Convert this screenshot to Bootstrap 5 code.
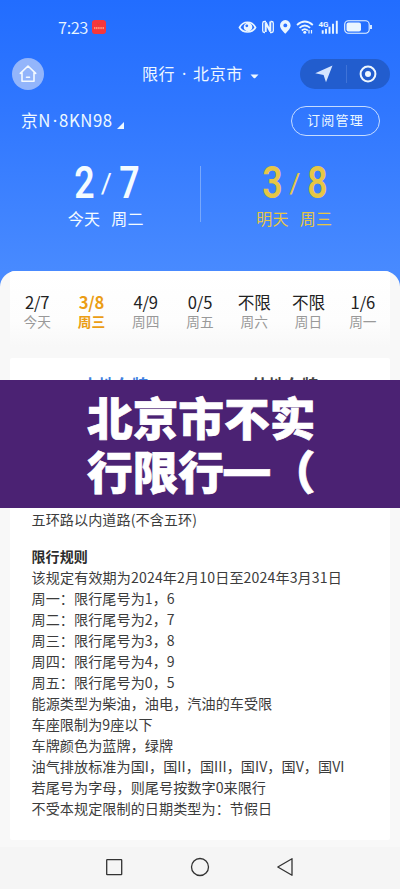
<!DOCTYPE html>
<html lang="zh-CN">
<head>
<meta charset="utf-8">
<meta name="viewport" content="width=device-width, initial-scale=1">
<title>限行 · 北京市</title>
<link href="https://cdn.jsdelivr.net/npm/bootstrap@5.3.0/dist/css/bootstrap.min.css" rel="stylesheet">
<style>
body{font-family:"Noto Sans CJK SC",sans-serif;background:#f5f5f5;}
.screen{width:400px;height:889px;background:linear-gradient(#226dff 0,#3077ff 110px,#488aff 270px,#488aff 300px);}
svg{display:block;flex:none}
.statusbar{height:54px;padding:0 28px 0 58px;color:#eaf6ff}
.clock{font-size:16.500px;line-height:20px;font-weight:350;letter-spacing:-.4px}
.appchip{width:14px;height:14px;border-radius:3px;background:#f5373c;margin-left:4px}
.titlebar{height:40px;padding:0 10px 0 12px}
.home{width:32px;height:32px;background:#93b5fb}
.city{font-size:16px;line-height:24px;color:#eef7ff;letter-spacing:.55px;margin-left:98px;margin-top:-1px}
.dot{display:inline-block;text-align:center;font-family:"Noto Sans",sans-serif;letter-spacing:0}
.city .dot{width:18px}
.plate .dot{width:8px}
.capsule{width:90px;height:30px;background:#225dce;padding:0 13px 0 15px}
.capsule .split{width:1px;height:18px;background:#3f73d8}
.platebar{height:54px;padding:0 20px 0 21px;color:#eef8ff}
.plate{font-size:16.800px;line-height:24px;margin-top:-2px;letter-spacing:.55px}
.manage{width:89px;height:30px;border:1px solid #c6dcff;font-size:13px;letter-spacing:1.2px;padding-bottom:2px;color:#eef8ff}
.days{height:123px;padding-top:18px}
.day{width:188px;color:#f4fbff}
.day.today{margin-left:12px}
.day.next{color:#e6c646;margin-right:12px}
.figs{height:36px;font-family:Roboto,sans-serif;font-weight:500;font-size:43.500px;line-height:36px;padding-left:1px}
.figs b{display:inline-block;font-weight:600;transform:scaleX(.82);width:24px;text-align:center}
.figs i{font-style:normal;font-weight:400;font-size:27px;width:21px;text-align:center}
.when{font-size:16px;line-height:24px;letter-spacing:.3px;word-spacing:1.500px;margin-top:4px}
.rule{width:1px;height:56px;background:#79a8fb;margin-top:0}
.sheet{height:576px;background:#f8f8f8;border-radius:16px 16px 0 0;overflow:hidden;padding:0 10px}
.week{height:87px;background:linear-gradient(#fff 0,#fdfdfd 50px,#f8f8f8 76px);padding-top:19px}
.wd{font-size:16.600px;line-height:24px;color:#222;letter-spacing:-.15px}
.wl{font-size:13.700px;line-height:15px;color:#999}
.sel .wd,.sel .wl{color:#eb9d14;font-weight:700}
.panel{height:482px;background:#fff;padding:15px 22px 0;border-radius:2px}
.tabs{font-size:16.700px;line-height:24px;font-weight:700;margin:0 -22px;color:#444}
.tabs .on{color:#3f7fe0}
.rules{font-size:14.100px;line-height:21px;color:#3c3c3c;letter-spacing:.07px;white-space:nowrap;padding-top:112px;margin-left:-.5px}
.rules .term{letter-spacing:.13px}
.rules h6{font-size:14px;line-height:21px;font-weight:700;color:#2c2c2c;margin:16px 0 0}
.banner{top:380px;left:0;width:400px;height:128px;background:#4b2273;color:#fff;font-weight:900;font-size:45.700px;line-height:54px;padding:9px 0 0 87px;white-space:nowrap;-webkit-text-stroke:.7px #fff}
.dash{display:inline-block;width:45.700px;height:54px;vertical-align:top;font-family:Inter,sans-serif;font-size:45.700px;line-height:54px;text-align:center}
.navkeys{height:42px;background:#f5f5f5;padding:0 106px 3px 105px}
</style>
<script src="https://cdn.jsdelivr.net/npm/bootstrap@5.3.0/dist/js/bootstrap.bundle.min.js"></script>
</head>
<body>
<div class="screen position-relative overflow-hidden">
  <div class="statusbar d-flex align-items-center">
    <span class="clock">7:23</span><span class="appchip"><svg width="14" height="14" viewBox="0 0 14 14"><path d="M2 7.600h10M2 8.600h10" stroke="#ff9b7c" stroke-dasharray="1.3 .5"/><path d="M5 3.700l1.500 1 1.500-1" stroke="#d64a2a" fill="none"/></svg></span>
    <svg class="ms-auto" width="134" height="18" viewBox="238 18 134 18" fill="none" stroke="#eaf6ff">
      <path d="M239.500 27.500C243 20.500 252 20.500 255.500 27.500C252 33.500 243 33.500 239.500 27.500Z" stroke-width="1.700"/>
      <circle cx="248" cy="27" r="4.300" fill="#eaf6ff" stroke="none"/><circle cx="246.800" cy="25.800" r="1.400" fill="#2d73ff" stroke="none"/>
      <path d="M266 21.500h-1.500q-1.800 0-1.800 1.800v7.400q0 1.800 1.800 1.800h.5M270.500 21.500h1q1.800 0 1.800 1.800v7.400q0 1.800-1.800 1.800h-1.500" stroke-width="1.300"/>
      <path d="M265.700 32v-9.500l4.600 9v-10" stroke-width="2"/>
      <path d="M285.300 33.800c-2-2.700-5.300-5-5.300-8.400a5.300 5.300 0 0 1 10.600 0c0 3.400-3.300 5.700-5.300 8.400z" fill="#eaf6ff" stroke="none"/><circle cx="285.300" cy="25.400" r="1.900" fill="#2a70ff" stroke="none"/>
      <path d="M297 25q7.800-7 15.800 0M299.500 27.800q5.300-4.600 10.600 0M301.800 30.500q3-2.600 6 0" stroke-width="1.700"/><circle cx="304.800" cy="32.200" r="1.500" fill="#eaf6ff" stroke="none"/><path d="M309 30v3.500M311.500 30v3.500" stroke-width="1.200"/>
      <text x="318.500" y="26.500" font-family="Roboto,sans-serif" font-size="8" font-weight="700" fill="#eaf6ff" stroke="none">4G</text>
      <path d="M322.700 33.700v-3.500M326 33.700v-5M329.500 33.700v-7M333 33.700v-10M336.800 33.700v-13" stroke-width="1.900"/>
      <rect x="344.700" y="20.700" width="24.500" height="12.500" rx="3.700" stroke-width="1.100"/><rect x="346.500" y="22.400" width="14.500" height="9.200" rx="2" fill="#eaf6ff" stroke="none"/><path d="M371 25v4" stroke-width="1.800"/>
    </svg>
  </div>
  <div class="titlebar d-flex align-items-center">
    <span class="home rounded-circle d-flex align-items-center justify-content-center"><svg width="20" height="20" viewBox="0 0 20 20" fill="none" stroke="#f4faff" stroke-width="1.600" stroke-linejoin="round" stroke-linecap="round"><path d="M2.300 9.400L10 2l7.700 7.400M4 8.500v8.800h12V8.500M8.500 13.200h3"/></svg></span>
    <span class="city">限行<span class="dot">·</span>北京市</span>
    <svg class="ms-1 mt-1" width="12" height="5" viewBox="-3 0 12 5"><path d="M.5.500h8L5.300 4q-.8.700-1.600 0z" fill="#eef7ff"/></svg>
    <span class="capsule rounded-pill d-flex align-items-center justify-content-between ms-auto">
      <svg width="18" height="18" viewBox="0 0 18 18"><path d="M.2 8.200L17.500.500 11 17.200 8.600 9.900z" fill="#d5e5ff"/></svg><span class="split"></span>
      <svg width="18" height="18" viewBox="0 0 18 18"><circle cx="9" cy="9" r="7.400" fill="none" stroke="#eef7ff" stroke-width="2"/><circle cx="9" cy="9" r="3" fill="#eef7ff"/></svg>
    </span>
  </div>
  <div class="platebar d-flex align-items-center">
    <span class="plate">京N<span class="dot">·</span>8KN98</span><svg class="ms-1 mt-2" width="7" height="7" viewBox="0 0 7 7"><path d="M7 0v7H0z" fill="#eef8ff"/></svg>
    <span class="manage rounded-pill d-flex align-items-center justify-content-center ms-auto">订阅管理</span>
  </div>
  <div class="days d-flex">
    <div class="day today"><div class="figs d-flex justify-content-center"><b>2</b><i>/</i><b>7</b></div><div class="when text-center">今天&nbsp; 周二</div></div>
    <span class="rule"></span>
    <div class="day next"><div class="figs d-flex justify-content-center"><b>3</b><i>/</i><b>8</b></div><div class="when text-center">明天&nbsp; 周三</div></div>
  </div>
  <main class="sheet">
    <div class="week row row-cols-7 g-0 text-center">
      <div class="col"><div class="wd">2/7</div><div class="wl">今天</div></div>
      <div class="col sel"><div class="wd">3/8</div><div class="wl">周三</div></div>
      <div class="col"><div class="wd">4/9</div><div class="wl">周四</div></div>
      <div class="col"><div class="wd">0/5</div><div class="wl">周五</div></div>
      <div class="col"><div class="wd">不限</div><div class="wl">周六</div></div>
      <div class="col"><div class="wd">不限</div><div class="wl">周日</div></div>
      <div class="col"><div class="wd">1/6</div><div class="wl">周一</div></div>
    </div>
    <section class="panel">
      <div class="tabs d-flex text-center"><span class="on w-50 ps-3 ms-1">本地车牌</span><span class="w-50 pe-3 me-1">外地车牌</span></div>
      <div class="rules">
        <div>五环路以内道路(不含五环)</div>
        <h6>限行规则</h6>
        <div class="term">该规定有效期为2024年2月10日至2024年3月31日</div>
        <div>周一：限行尾号为1，6</div>
        <div>周二：限行尾号为2，7</div>
        <div>周三：限行尾号为3，8</div>
        <div>周四：限行尾号为4，9</div>
        <div>周五：限行尾号为0，5</div>
        <div>能源类型为柴油，油电，汽油的车受限</div>
        <div>车座限制为9座以下</div>
        <div>车牌颜色为蓝牌，绿牌</div>
        <div>油气排放标准为国I，国II，国III，国IV，国V，国VI</div>
        <div>若尾号为字母，则尾号按数字0来限行</div>
        <div>不受本规定限制的日期类型为：节假日</div>
      </div>
    </section>
  </main>
  <footer class="navkeys d-flex align-items-center justify-content-between">
    <svg width="18" height="18" viewBox="0 0 18 18"><rect x="1.700" y="1.700" width="15" height="15" rx=".5" fill="none" stroke="#333" stroke-width="1.300"/></svg>
    <svg width="20" height="20" viewBox="0 0 20 20"><circle cx="10" cy="10" r="8.500" fill="none" stroke="#333" stroke-width="1.300"/></svg>
    <svg width="18" height="20" viewBox="0 0 18 20"><path d="M16 1.700v16.600L1.800 10z" fill="none" stroke="#333" stroke-width="1.300" stroke-linejoin="round"/></svg>
  </footer>
  <div class="banner position-absolute">北京市不实<br>行限行<span class="dash">—</span>（</div>
</div>
</body>
</html>
